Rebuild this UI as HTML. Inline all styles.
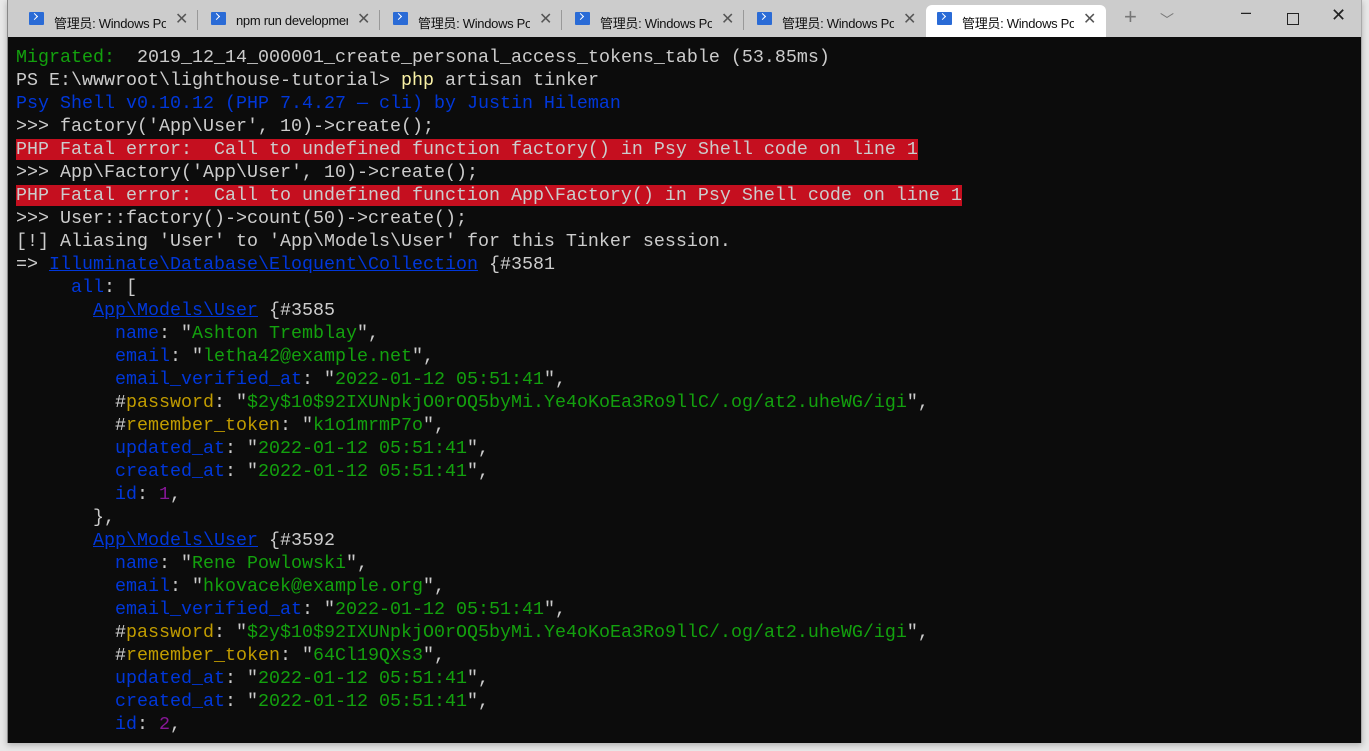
<!DOCTYPE html>
<html><head><meta charset="utf-8"><style>
body{margin:0;width:1369px;height:751px;background:#e8e8e8;overflow:hidden;position:relative;font-family:"Liberation Sans","Noto Sans CJK SC",sans-serif}
.win{position:absolute;left:7px;top:0;width:1353px;height:743px;background:#cccccc;border-left:1px solid #888;border-right:1px solid #aaa;box-shadow:0 2px 6px rgba(0,0,0,.25)}
.tab{position:absolute;top:5px;height:32px;width:180px;font-size:13px;color:#111}
.tab .ic{position:absolute;left:11px;top:7px;width:15px;height:13px;background:#2a6bd6;border-radius:1px}
.tab .ic:after{content:"";position:absolute;left:3px;top:2px;width:4px;height:4px;border-right:1.5px solid #fff;border-bottom:1.5px solid #fff;transform:rotate(-45deg)}
.tab .t{position:absolute;left:36px;top:8px;white-space:nowrap;width:112px;overflow:hidden;letter-spacing:-0.3px}
.tab .x{position:absolute;left:157px;top:4px;font-size:16px;color:#555}
.tab.act{background:#fff;border-radius:6px 6px 0 0}
.sep{position:absolute;top:10px;width:1px;height:20px;background:#999}
.term{position:absolute;left:0;top:37px;width:1353px;height:706px;background:#0c0c0c}
pre{margin:0;position:absolute;left:8px;top:9px;font-family:"Liberation Mono",monospace;font-size:18.33px;line-height:23px;color:#cccccc}
.g{color:#13a10e}.b{color:#0037da}.y{color:#c19c00}.p{color:#881798}.yy{color:#f9f1a5}
.u{color:#0037da;text-decoration:underline}
.err{background:#c50f1f;color:#cccccc}
.ctl{position:absolute;top:6px;font-size:18px;color:#222}
</style></head><body>
<div class="win">
<div class="tab" style="left:10px"><div class="ic"></div><div class="t">管理员: Windows PowerShell</div><div class="x">✕</div></div>
<div class="sep" style="left:189px"></div>
<div class="tab" style="left:192px"><div class="ic"></div><div class="t">npm run development</div><div class="x">✕</div></div>
<div class="sep" style="left:371px"></div>
<div class="tab" style="left:374px"><div class="ic"></div><div class="t">管理员: Windows PowerShell</div><div class="x">✕</div></div>
<div class="sep" style="left:553px"></div>
<div class="tab" style="left:556px"><div class="ic"></div><div class="t">管理员: Windows PowerShell</div><div class="x">✕</div></div>
<div class="sep" style="left:735px"></div>
<div class="tab" style="left:738px"><div class="ic"></div><div class="t">管理员: Windows PowerShell</div><div class="x">✕</div></div>
<div class="tab act" style="left:918px"><div class="ic"></div><div class="t">管理员: Windows PowerShell</div><div class="x">✕</div></div>
<div class="ctl" style="left:1116px;font-size:22px;top:4px;color:#777">+</div>
<div class="ctl" style="left:1152px;color:#777;font-size:14px;top:10px">﹀</div>
<div class="ctl" style="left:1233px;top:2px">–</div>
<div style="position:absolute;left:1279px;top:13px;width:10px;height:10px;border:1px solid #222"></div>
<div class="ctl" style="left:1323px;top:5px">✕</div>
<div class="term"><pre><span class="g">Migrated:</span>  2019_12_14_000001_create_personal_access_tokens_table (53.85ms)
PS E:\wwwroot\lighthouse-tutorial&gt; <span class="yy">php</span> artisan tinker
<span class="b">Psy Shell v0.10.12 (PHP 7.4.27 — cli) by Justin Hileman</span>
&gt;&gt;&gt; factory('App\User', 10)-&gt;create();
<span class="err">PHP Fatal error:  Call to undefined function factory() in Psy Shell code on line 1</span>
&gt;&gt;&gt; App\Factory('App\User', 10)-&gt;create();
<span class="err">PHP Fatal error:  Call to undefined function App\Factory() in Psy Shell code on line 1</span>
&gt;&gt;&gt; User::factory()-&gt;count(50)-&gt;create();
[!] Aliasing 'User' to 'App\Models\User' for this Tinker session.
=&gt; <span class="u">Illuminate\Database\Eloquent\Collection</span> {#3581
     <span class="b">all</span>: [
       <span class="u">App\Models\User</span> {#3585
         <span class="b">name</span>: "<span class="g">Ashton Tremblay</span>",
         <span class="b">email</span>: "<span class="g">letha42@example.net</span>",
         <span class="b">email_verified_at</span>: "<span class="g">2022-01-12 05:51:41</span>",
         #<span class="y">password</span>: "<span class="g">$2y$10$92IXUNpkjO0rOQ5byMi.Ye4oKoEa3Ro9llC/.og/at2.uheWG/igi</span>",
         #<span class="y">remember_token</span>: "<span class="g">k1o1mrmP7o</span>",
         <span class="b">updated_at</span>: "<span class="g">2022-01-12 05:51:41</span>",
         <span class="b">created_at</span>: "<span class="g">2022-01-12 05:51:41</span>",
         <span class="b">id</span>: <span class="p">1</span>,
       },
       <span class="u">App\Models\User</span> {#3592
         <span class="b">name</span>: "<span class="g">Rene Powlowski</span>",
         <span class="b">email</span>: "<span class="g">hkovacek@example.org</span>",
         <span class="b">email_verified_at</span>: "<span class="g">2022-01-12 05:51:41</span>",
         #<span class="y">password</span>: "<span class="g">$2y$10$92IXUNpkjO0rOQ5byMi.Ye4oKoEa3Ro9llC/.og/at2.uheWG/igi</span>",
         #<span class="y">remember_token</span>: "<span class="g">64Cl19QXs3</span>",
         <span class="b">updated_at</span>: "<span class="g">2022-01-12 05:51:41</span>",
         <span class="b">created_at</span>: "<span class="g">2022-01-12 05:51:41</span>",
         <span class="b">id</span>: <span class="p">2</span>,</pre></div>
</div>
</body></html>
